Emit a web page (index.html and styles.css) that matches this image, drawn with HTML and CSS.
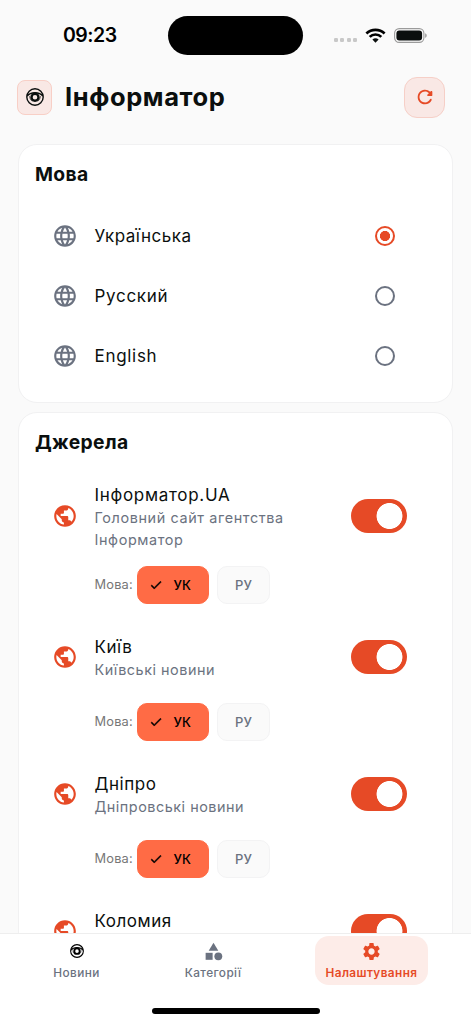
FILE: index.html
```html
<!DOCTYPE html>
<html lang="uk">
<head>
<meta charset="utf-8">
<title>Інформатор</title>
<link rel="stylesheet" href="styles.css">
</head>
<body>
<svg class="sprite" width="0" height="0">
  <symbol id="language" viewBox="0 0 24 24"><path d="M11.99 2C6.47 2 2 6.48 2 12s4.47 10 9.99 10C17.52 22 22 17.52 22 12S17.52 2 11.99 2zm6.93 6h-2.95c-.32-1.25-.78-2.45-1.38-3.56 1.84.63 3.37 1.91 4.33 3.56zM12 4.04c.83 1.2 1.48 2.53 1.91 3.96h-3.82c.43-1.43 1.08-2.76 1.91-3.96zM4.26 14C4.1 13.36 4 12.69 4 12s.1-1.36.26-2h3.38c-.08.66-.14 1.32-.14 2s.06 1.34.14 2H4.26zm.82 2h2.95c.32 1.25.78 2.45 1.38 3.56-1.84-.63-3.37-1.9-4.33-3.56zm2.95-8H5.08c.96-1.66 2.49-2.93 4.33-3.56C8.81 5.55 8.35 6.75 8.03 8zM12 19.96c-.83-1.2-1.48-2.53-1.91-3.96h3.82c-.43 1.43-1.08 2.76-1.91 3.96zM14.34 14H9.66c-.09-.66-.16-1.32-.16-2s.07-1.35.16-2h4.68c.09.65.16 1.32.16 2s-.07 1.34-.16 2zm.25 5.56c.6-1.11 1.06-2.31 1.38-3.56h2.95c-.96 1.65-2.49 2.93-4.33 3.56zM16.36 14c.08-.66.14-1.32.14-2s-.06-1.34-.14-2h3.38c.16.64.26 1.31.26 2s-.1 1.36-.26 2h-3.38z"/></symbol>
  <symbol id="public" viewBox="0 0 24 24"><path d="M12 2C6.48 2 2 6.48 2 12s4.48 10 10 10 10-4.48 10-10S17.52 2 12 2zm-1 17.93c-3.95-.49-7-3.85-7-7.93 0-.62.08-1.21.21-1.79L9 15v1c0 1.1.9 2 2 2v1.93zm6.9-2.54c-.26-.81-1-1.39-1.9-1.39h-1v-3c0-.55-.45-1-1-1H8v-2h2c.55 0 1-.45 1-1V7h2c1.1 0 2-.9 2-2v-.41c2.93 1.19 5 4.06 5 7.41 0 2.08-.8 3.97-2.1 5.39z"/></symbol>
  <symbol id="eye" viewBox="0 0 18 18"><g fill="none" stroke="currentColor"><circle cx="9" cy="9" r="8.2" stroke-width="1.4"/><path d="M1.2 8C4.4 3.6 13.6 3.6 16.8 8" stroke-width="1.4"/><circle cx="9" cy="9.2" r="3.5" stroke-width="2.4"/><path d="M3.4 8.2q.6 4 3 5.2M14.6 8.2q-.6 4-3 5.2" stroke-width=".6"/></g></symbol>
  <symbol id="check" viewBox="0 0 24 24"><path d="M9 16.17 4.83 12l-1.42 1.41L9 19 21 7l-1.41-1.41z" stroke="currentColor" stroke-width=".9"/></symbol>
</svg>

<div class="screen">
  <div class="statusbar">
    <span class="time">09:23</span>
    <span class="island"></span>
    <div class="indicators">
      <span class="signal"><i></i><i></i><i></i><i></i></span>
      <svg class="wifi" viewBox="0 0 20 15"><g fill="none" stroke="#000" stroke-width="2.7"><path d="M.9 5.5a13 13 0 0 1 18.2 0"/><path d="M4.2 8.9a8.2 8.2 0 0 1 11.6 0"/></g><path d="M6.9 11.6a4.5 4.5 0 0 1 6.2 0L10 14.7z"/></svg>
      <svg class="battery" viewBox="0 0 33 15"><rect x=".6" y=".6" width="29.3" height="13.8" rx="4.6" fill="none" stroke="#9b9b9b" stroke-width="1.1"/><rect x="2.4" y="2.4" width="25.7" height="10.2" rx="3"/><path d="M31.2 5.2c2 .8 2 3.8 0 4.6z" fill="#999"/></svg>
    </div>
  </div>

  <header class="header">
    <span class="logo"><svg><use href="#eye"/></svg></span>
    <h1>Інформатор</h1>
    <button class="refresh"><svg viewBox="0 0 24 24"><path d="M17.65 6.35c-1.63-1.63-3.94-2.57-6.48-2.31-3.67.37-6.69 3.35-7.1 7.02C3.52 15.91 7.27 20 12 20c3.19 0 5.93-1.87 7.21-4.56.32-.67-.16-1.44-.9-1.44-.37 0-.72.2-.88.53-1.13 2.43-3.84 3.97-6.8 3.31-2.22-.49-4.01-2.3-4.48-4.52C5.31 9.44 8.26 6 12 6c1.66 0 3.14.69 4.22 1.78l-1.51 1.51c-.63.63-.19 1.71.7 1.71H19c.55 0 1-.45 1-1V6.41c0-.89-1.08-1.34-1.71-.71l-.64.65z"/></svg></button>
  </header>

  <main class="content">
    <section class="card languages">
      <h2>Мова</h2>
      <label class="lang current"><svg class="globe"><use href="#language"/></svg><span>Українська</span><i class="radio on"></i></label>
      <label class="lang"><svg class="globe"><use href="#language"/></svg><span>Русский</span><i class="radio"></i></label>
      <label class="lang"><svg class="globe"><use href="#language"/></svg><span>English</span><i class="radio"></i></label>
    </section>

    <section class="card sources">
      <h2>Джерела</h2>
      <article class="source">
        <div class="head tall"><svg class="globe red"><use href="#public"/></svg><div class="info"><h3>Інформатор.UA</h3><p>Головний сайт агентства<br>Інформатор</p></div><i class="switch"></i></div>
        <div class="chips"><span class="label">Мова:</span><span class="chip selected"><svg><use href="#check"/></svg>УК</span><span class="chip">РУ</span></div>
      </article>
      <article class="source">
        <div class="head"><svg class="globe red"><use href="#public"/></svg><div class="info"><h3>Київ</h3><p>Київські новини</p></div><i class="switch"></i></div>
        <div class="chips"><span class="label">Мова:</span><span class="chip selected"><svg><use href="#check"/></svg>УК</span><span class="chip">РУ</span></div>
      </article>
      <article class="source">
        <div class="head"><svg class="globe red"><use href="#public"/></svg><div class="info"><h3>Дніпро</h3><p>Дніпровські новини</p></div><i class="switch"></i></div>
        <div class="chips"><span class="label">Мова:</span><span class="chip selected"><svg><use href="#check"/></svg>УК</span><span class="chip">РУ</span></div>
      </article>
      <article class="source">
        <div class="head"><svg class="globe red"><use href="#public"/></svg><div class="info"><h3>Коломия</h3></div><i class="switch"></i></div>
      </article>
    </section>
  </main>

  <nav class="tabs">
    <div class="tablist">
      <a class="tab news"><svg class="eye"><use href="#eye"/></svg><span>Новини</span></a>
      <a class="tab categories"><svg viewBox="0 0 24 24"><path d="m12 2-5.5 9h11z"/><circle cx="17.5" cy="17.5" r="4.5"/><path d="M3 13.5h8v8H3z"/></svg><span>Категорії</span></a>
      <a class="tab active"><svg viewBox="0 0 24 24"><path d="M19.14 12.94c.04-.3.06-.61.06-.94 0-.32-.02-.64-.07-.94l2.03-1.58c.18-.14.23-.41.12-.61l-1.92-3.32c-.12-.22-.37-.29-.59-.22l-2.39.96c-.5-.38-1.03-.7-1.62-.94l-.36-2.54c-.04-.24-.24-.41-.48-.41h-3.84c-.24 0-.43.17-.47.41l-.36 2.54c-.59.24-1.13.57-1.62.94l-2.39-.96c-.22-.08-.47 0-.59.22L2.74 8.87c-.12.21-.08.47.12.61l2.03 1.58c-.05.3-.09.63-.09.94s.02.64.07.94l-2.03 1.58c-.18.14-.23.41-.12.61l1.92 3.32c.12.22.37.29.59.22l2.39-.96c.5.38 1.03.7 1.62.94l.36 2.54c.05.24.24.41.48.41h3.84c.24 0 .44-.17.47-.41l.36-2.54c.59-.24 1.13-.56 1.62-.94l2.39.96c.22.08.47 0 .59-.22l1.92-3.32c.12-.22.07-.47-.12-.61l-2.01-1.58zM12 15.6c-1.98 0-3.6-1.62-3.6-3.6s1.62-3.6 3.6-3.6 3.6 1.62 3.6 3.6-1.62 3.6-3.6 3.6z"/></svg><span>Налаштування</span></a>
    </div>
    <span class="home-indicator"></span>
  </nav>
</div>
</body>
</html>
```
FILE: styles.css
```css
* { box-sizing: border-box; margin: 0; }
body { background: #fafafa; color: #0b0f0e; font-family: Inter, "Liberation Sans", sans-serif; }
svg { display: block; fill: currentColor; flex: none; }
.sprite { position: absolute; }
.screen { width: 471px; height: 1024px; display: flex; flex-direction: column; overflow: hidden; }

.statusbar { height: 70px; flex: none; display: grid; grid-template-columns: 168px 135px 1fr; align-items: center; }
.time { padding-left: 63px; font-size: 19.5px; font-weight: 600; letter-spacing: -.5px; color: #000; }
.island { height: 39px; border-radius: 20px; background: #000; }
.indicators { display: flex; align-items: center; padding-left: 31px; }
.signal { display: flex; gap: 2.4px; padding-top: 10px; }
.signal i { width: 4px; height: 4px; border-radius: 1.3px; background: #c8c8c8; }
.wifi { width: 21px; height: 15px; margin-left: 8px; }
.battery { width: 33px; height: 15px; margin-left: 8px; }

.header { height: 74px; flex: none; display: flex; align-items: center; padding: 0 26px 20px 17px; }
.logo { width: 35px; height: 35px; display: grid; place-items: center; border: 1px solid #f8cfc6; border-radius: 8px; background: #f9e8e5; }
.logo svg { width: 18px; height: 18px; }
.header h1 { flex: 1; padding-left: 13px; font-size: 25.5px; line-height: 32px; font-weight: 700; letter-spacing: .6px; }
.refresh { width: 41px; height: 41px; padding: 0; display: grid; place-items: center; border: 1px solid #f6cfc7; border-radius: 13px; background: #f9e8e5; color: #e64a26; }
.refresh svg { width: 22px; height: 22px; }

.content { height: 789px; flex: none; display: flex; flex-direction: column; gap: 9px; padding: 0 18px 0 17.5px; overflow: hidden; }
.card { flex: none; border: 1px solid #f1f1f2; border-radius: 19px; background: #fff; padding: 0 17px 0 16.5px; }
.card h2 { font-size: 19.3px; line-height: 24px; font-weight: 700; letter-spacing: .35px; }
.languages { height: 259px; padding-top: 17px; }
.languages h2 { margin-bottom: 20px; }
.lang { height: 60px; display: flex; align-items: center; padding: 0 40px 0 16.5px; }
.globe { width: 26px; height: 26px; color: #6b7280; }
.globe.red { color: #e64a26; }
.lang span { flex: 1; padding-left: 17px; font-size: 17px; letter-spacing: .7px; }
.lang.current span { letter-spacing: .5px; }
.radio { width: 20px; height: 20px; border: 2px solid #6b7280; border-radius: 50%; }
.radio.on { border-color: #e64a26; background: radial-gradient(circle, #e64a26 4.8px, transparent 5.3px); }

.sources { padding-top: 17px; }
.sources h2 { margin-bottom: 16.5px; }
.source { height: 137px; padding-left: 16.5px; }
.source:nth-of-type(1) { height: 145px; }
.head { height: 82px; display: flex; align-items: center; padding-right: 28px; }
.head.tall { height: 90px; }
.info { flex: 1; height: 44px; padding-left: 17px; }
.tall .info { height: 66px; }
.info h3 { font-size: 17px; line-height: 24.5px; font-weight: 400; letter-spacing: .55px; }
.tall h3 { letter-spacing: .7px; }
.info p { font-size: 14.4px; line-height: 21.5px; letter-spacing: .52px; color: #6b7280; }
.tall p { letter-spacing: .62px; }
.switch { width: 56px; height: 34px; border-radius: 17px; background: radial-gradient(circle at 38.5px 17px, #fff 12.6px, #e64a26 13.3px); }
.chips { margin-top: 5px; padding-left: 43px; display: flex; align-items: center; font-size: 13px; }
.label { width: 42px; font-size: 12.8px; letter-spacing: .2px; color: #777; }
.chip { width: 53px; height: 38px; display: flex; align-items: center; justify-content: center; border: 1px solid #f3f3f4; border-radius: 10px; background: #fafafa; color: #6b7280; font-weight: 500; }
.chip.selected { width: 72.5px; margin-right: 8px; padding-left: 11px; justify-content: flex-start; border-color: #ff6b45; background: #ff6b45; color: #000; }
.chip svg { width: 14px; height: 14px; margin-right: 11px; }

.tabs { height: 91px; flex: none; display: flex; flex-direction: column; align-items: center; border-top: 1px solid #eee; background: #fff; }
.tablist { width: 100%; height: 49px; margin-top: 2px; display: grid; grid-template-columns: 153px 120px 1fr; }
.tab { display: flex; flex-direction: column; align-items: center; padding-top: 5px; color: #6b7280; font-size: 11.8px; line-height: 16px; font-weight: 500; letter-spacing: .4px; }
.tab svg { width: 21px; height: 21px; margin-bottom: 3px; }
.tab .eye { width: 14px; height: 14px; margin: 3px 0 7px; color: #000; }
.tab.active { width: 113px; margin-left: 42px; border-radius: 14px; background: #fdece8; color: #e64a26; font-weight: 600; }
.home-indicator { width: 168px; height: 6px; margin-top: 23px; border-radius: 3px; background: #000; }
```
